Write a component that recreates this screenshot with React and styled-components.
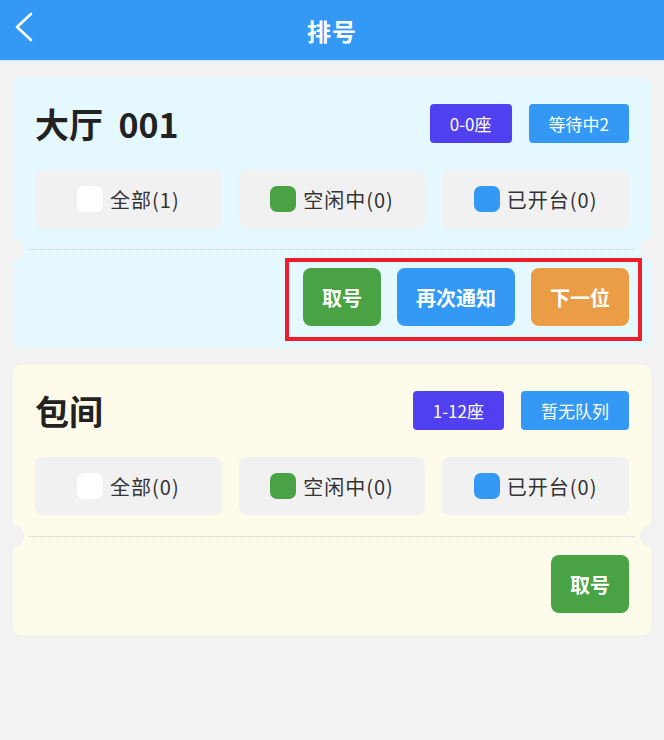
import React from 'react';
import styled, { createGlobalStyle } from 'styled-components';

const colors = {
  PAGE: '#f2f2f2',
  BLUE: '#3499f5',
  PURPLE: '#5140ef',
  GREEN: '#49a345',
  ORANGE: '#eb9d46',
  CHIP: '#f1f1f2',
  TEXT: '#333333',
  TITLE: '#222222',
};

const GlobalStyle = createGlobalStyle`
  body {
    margin: 0;
    background: ${colors.PAGE};
    font-family: "Noto Sans CJK SC", "Noto Sans", sans-serif;
  }
`;

const rooms = [
  {
    name: '大厅  001',
    bg: '#e5f8fe',
    seats: '0-0座',
    queue: '等待中2',
    counts: [1, 0, 0],
    actions: [
      { label: '取号', color: colors.GREEN },
      { label: '再次通知', color: colors.BLUE },
      { label: '下一位', color: colors.ORANGE },
    ],
    highlight: true,
  },
  {
    name: '包间',
    bg: '#fefbeb',
    seats: '1-12座',
    queue: '暂无队列',
    counts: [0, 0, 0],
    actions: [{ label: '取号', color: colors.GREEN }],
  },
];

const statuses = [
  { label: '全部', color: '#ffffff' },
  { label: '空闲中', color: colors.GREEN },
  { label: '已开台', color: colors.BLUE },
];

const BackIcon = () => (
  <svg width="20" height="30" viewBox="0 0 20 30">
    <polyline
      points="17,2 3,15 17,28"
      fill="none"
      stroke="#fff"
      strokeWidth="2.6"
      strokeLinecap="round"
      strokeLinejoin="round"
    />
  </svg>
);

const RoomCard = ({ room }) => {
  const buttons = room.actions.map((a) => (
    <ActionButton key={a.label} color={a.color}>
      {a.label}
    </ActionButton>
  ));

  return (
    <Card bg={room.bg}>
      <Top>
        <CardHeader>
          <RoomName>{room.name}</RoomName>
          <Badges>
            <Badge color={colors.PURPLE}>{room.seats}</Badge>
            <Badge color={colors.BLUE}>{room.queue}</Badge>
          </Badges>
        </CardHeader>
        <Chips>
          {statuses.map((s, i) => (
            <Chip key={s.label}>
              <Swatch color={s.color} />
              {s.label}({room.counts[i]})
            </Chip>
          ))}
        </Chips>
      </Top>
      <Divider />
      <Bottom>
        {room.highlight ? <Highlight>{buttons}</Highlight> : buttons}
      </Bottom>
    </Card>
  );
};

export default function App() {
  return (
    <>
      <GlobalStyle />
      <NavBar>
        <BackButton>
          <BackIcon />
        </BackButton>
        <NavTitle>排号</NavTitle>
      </NavBar>
      <List>
        {rooms.map((r) => (
          <RoomCard key={r.name} room={r} />
        ))}
      </List>
    </>
  );
}

const NavBar = styled.header`
  position: relative;
  height: 61px;
  background: ${colors.BLUE};
  border-bottom: 1px solid #cfe6fc;
  box-sizing: border-box;
  display: flex;
  align-items: center;
  justify-content: center;
`;

const BackButton = styled.div`
  position: absolute;
  left: 14px;
  top: 12px;
  display: flex;
`;

const NavTitle = styled.h1`
  margin: 0;
  color: #fff;
  font-size: 24px;
  font-weight: 700;
  letter-spacing: 1px;
`;

const List = styled.main`
  display: flex;
  flex-direction: column;
  gap: 17px;
  padding: 17px 13px;
`;

const Card = styled.section`
  background: ${({ bg }) => bg};
  border-radius: 8px;
  display: flex;
  flex-direction: column;
`;

const Top = styled.div`
  padding: 26px 22px 21px;
  display: flex;
  flex-direction: column;
  gap: 27px;
`;

const CardHeader = styled.div`
  display: flex;
  align-items: center;
  justify-content: space-between;
  height: 39px;
`;

const RoomName = styled.h2`
  margin: 0;
  font-size: 34px;
  font-weight: 700;
  color: ${colors.TITLE};
  white-space: pre;
`;

const Badges = styled.div`
  display: flex;
  gap: 17px;
`;

const Badge = styled.span`
  height: 39px;
  padding: 0 20px;
  border-radius: 4px;
  background: ${({ color }) => color};
  color: #fff;
  font-size: 17px;
  display: flex;
  align-items: center;
`;

const Chips = styled.div`
  display: grid;
  grid-template-columns: repeat(3, 1fr);
  gap: 17px;
`;

const Chip = styled.div`
  height: 58px;
  border-radius: 8px;
  background: ${colors.CHIP};
  display: flex;
  align-items: center;
  justify-content: center;
  gap: 7px;
  font-size: 20px;
  letter-spacing: 1px;
  color: ${colors.TEXT};
`;

const Swatch = styled.span`
  width: 26px;
  height: 26px;
  border-radius: 7px;
  background: ${({ color }) => color};
`;

const Divider = styled.div`
  position: relative;
  margin: 0 16px;
  border-top: 1px dotted #c8cccd;

  &::before,
  &::after {
    content: '';
    position: absolute;
    top: -12px;
    width: 22px;
    height: 22px;
    border-radius: 50%;
    background: ${colors.PAGE};
  }
  &::before {
    left: -27px;
  }
  &::after {
    right: -27px;
  }
`;

const Bottom = styled.div`
  padding: 18px 22px 22px;
  display: flex;
  justify-content: flex-end;
`;

const Highlight = styled.div`
  position: relative;
  display: flex;
  gap: 16px;

  &::after {
    content: '';
    position: absolute;
    top: -10px;
    left: -18px;
    right: -13px;
    bottom: -15px;
    border: 4px solid #ee1d2b;
    pointer-events: none;
  }
`;

const ActionButton = styled.button`
  height: 58px;
  padding: 0 19px;
  border: none;
  border-radius: 8px;
  background: ${({ color }) => color};
  color: #fff;
  font-family: inherit;
  font-size: 20px;
  font-weight: 700;
  cursor: pointer;
`;
